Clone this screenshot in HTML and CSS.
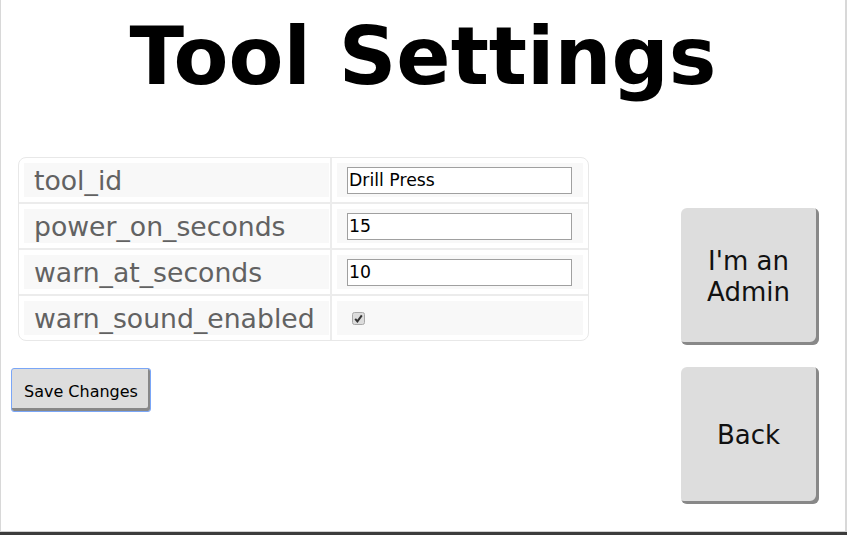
FILE: index.html
```html
<!DOCTYPE html>
<html>
<head>
<meta charset="utf-8">
<title>Tool Settings</title>
<link rel="stylesheet" href="styles.css">
</head>
<body>
<div class="frame">
  <div class="page">
    <h1 class="title">Tool Settings</h1>
    <div class="main">
      <div class="left">
        <table class="settings">
          <tr>
            <td class="key"><div class="cell">tool_id</div></td>
            <td class="val"><div class="cell"><input class="field" type="text" value="Drill Press"></div></td>
          </tr>
          <tr>
            <td class="key"><div class="cell">power_on_seconds</div></td>
            <td class="val"><div class="cell"><input class="field" type="text" value="15"></div></td>
          </tr>
          <tr>
            <td class="key"><div class="cell">warn_at_seconds</div></td>
            <td class="val"><div class="cell"><input class="field" type="text" value="10"></div></td>
          </tr>
          <tr>
            <td class="key"><div class="cell">warn_sound_enabled</div></td>
            <td class="val"><div class="cell"><span class="check"><svg width="13" height="13" viewBox="0 0 13 13"><rect x="0.5" y="0.5" width="12" height="12" rx="2" fill="#dcdcdc" stroke="#a8a8a8"/><path d="M3.2 6.8 L5.4 9.3 L9.8 3.4" fill="none" stroke="#333" stroke-width="2"/></svg></span></div></td>
          </tr>
        </table>
        <button class="save">Save Changes</button>
      </div>
      <div class="right">
        <button class="big">I'm an<br>Admin</button>
        <button class="big">Back</button>
      </div>
    </div>
  </div>
</div>
</body>
</html>
```
FILE: styles.css
```css
html, body {
  margin: 0;
  padding: 0;
  background: #fff;
}
body {
  font-family: "DejaVu Sans", sans-serif;
}
.frame {
  width: 847px;
  height: 535px;
  box-sizing: border-box;
  border-bottom: 3px solid #3c3c3c;
}
.page {
  height: 100%;
  box-sizing: border-box;
  border-left: 1px solid #d8d8d8;
  border-right: 2px solid #d8d8d8;
  border-bottom: 1px solid #d0d0d0;
}
.title {
  margin: 0;
  padding-top: 11px;
  font-size: 80px;
  line-height: 91px;
  font-weight: bold;
  text-align: center;
  color: #000;
}
.main {
  display: flex;
  margin-top: 55px;
}
.left {
  display: flex;
  flex-direction: column;
  align-items: flex-start;
  padding-left: 10px;
}
.settings {
  margin-left: 7px;
  border-collapse: separate;
  border-spacing: 0;
  border: 1px solid #e8e8e8;
  border-radius: 8px;
}
.settings td {
  padding: 5px 0 5px 5px;
  border-bottom: 2px solid #ececec;
}
.settings tr:last-child td {
  border-bottom: none;
}
.settings td.key {
  width: 305px;
  padding-right: 1px;
  border-right: 2px solid #ececec;
}
.settings td.val {
  width: 246px;
  padding-right: 5px;
}
.cell {
  height: 34px;
  background: #f8f8f8;
  display: flex;
  align-items: center;
}
.key .cell {
  padding-left: 10px;
  font-size: 26.7px;
  color: #626262;
}
.val .cell {
  padding-left: 10px;
}
.field {
  width: 225px;
  height: 27px;
  box-sizing: border-box;
  margin: 0;
  border: 1px solid #a0a0a0;
  padding: 0 1px;
  font-family: "DejaVu Sans", sans-serif;
  font-size: 17.3px;
  color: #000;
  background: #fff;
}
.check {
  display: flex;
  margin-left: 5px;
}
.save {
  margin-top: 27px;
  height: 44px;
  padding: 2px 12px 0 12px;
  font-family: "DejaVu Sans", sans-serif;
  font-size: 16px;
  color: #000;
  background: #dddddd;
  border: 1px solid #7aa6f7;
  border-radius: 3px;
  box-shadow: inset -2px -3px 0 #888;
}
.right {
  margin-left: auto;
  margin-right: 26px;
  padding-top: 51px;
  display: flex;
  flex-direction: column;
  gap: 22px;
}
.big {
  width: 138px;
  height: 137px;
  margin: 0;
  padding: 0 3px 0 0;
  font-family: "DejaVu Sans", sans-serif;
  font-size: 26px;
  line-height: 31px;
  color: #111;
  background: #dddddd;
  border: none;
  border-radius: 6px;
  box-shadow: inset -3px -3px 0 #888;
}
```
